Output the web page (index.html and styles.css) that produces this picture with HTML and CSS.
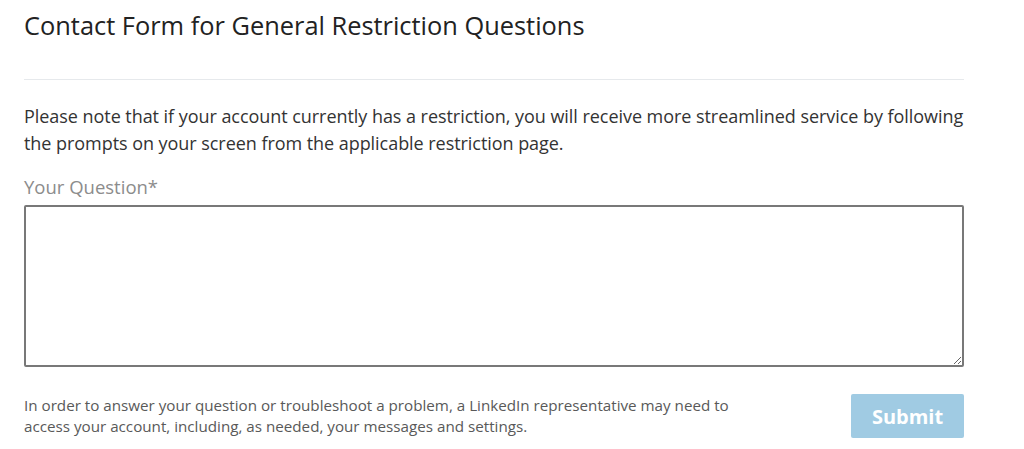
FILE: index.html
```html
<!DOCTYPE html>
<html lang="en">
<head>
  <meta charset="UTF-8" />
  <title>Contact Form</title>
  <link rel="stylesheet" href="styles.css">
</head>
<body>
  <div class="container">
    <h1>Contact Form for General Restriction Questions</h1>
    <hr class="divider">

    <p class="note">
      Please note that if your account currently has a restriction, you will receive more streamlined service by following<br>
      the prompts on your screen from the applicable restriction page.
    </p>

    <label class="label" for="question">Your Question*</label>
    <textarea id="question" class="question"></textarea>

    <div class="footer">
      <p class="disclaimer">
        In order to answer your question or troubleshoot a problem, a LinkedIn representative may need to<br>
        access your account, including, as needed, your messages and settings.
      </p>
      <button class="submit" disabled>Submit</button>
    </div>
  </div>
</body>
</html>
```

FILE: styles.css
```css
body {
  margin: 0;
  font-family: 'Open Sans', 'Noto Sans', sans-serif;
  background: #fff;
  color: #333;
}

.container {
  width: 940px;
  padding: 0 24px;
}

h1 {
  font-size: 25.4px;
  font-weight: 400;
  color: #222;
  margin: 9px 0 0;
  line-height: 32px;
  white-space: nowrap;
}

.divider {
  border: 0;
  border-top: 1px solid #e6e9ec;
  margin: 38px 0 0;
}

.note {
  font-size: 18px;
  line-height: 27px;
  color: #333;
  margin: 23px 0 0;
  letter-spacing: -0.05px;
  white-space: nowrap;
}

.label {
  display: block;
  font-size: 18.5px;
  color: #8c8c8c;
  margin-top: 17px;
  line-height: 26px;
}

.question {
  display: block;
  box-sizing: border-box;
  width: 940px;
  height: 162px;
  margin-top: 5px;
  border: 2px solid #787878;
  border-radius: 2px;
  resize: vertical;
  font-family: inherit;
}

.footer {
  display: flex;
  justify-content: space-between;
  align-items: flex-start;
  margin-top: 27px;
}

.disclaimer {
  margin: 1px 0 0;
  font-size: 15.2px;
  line-height: 21px;
  color: #595959;
  white-space: nowrap;
}

.submit {
  width: 113px;
  height: 44px;
  border: 0;
  border-radius: 2px;
  background: #a0cbe3;
  color: #fff;
  font-family: inherit;
  font-size: 20px;
  font-weight: 700;
}
```
